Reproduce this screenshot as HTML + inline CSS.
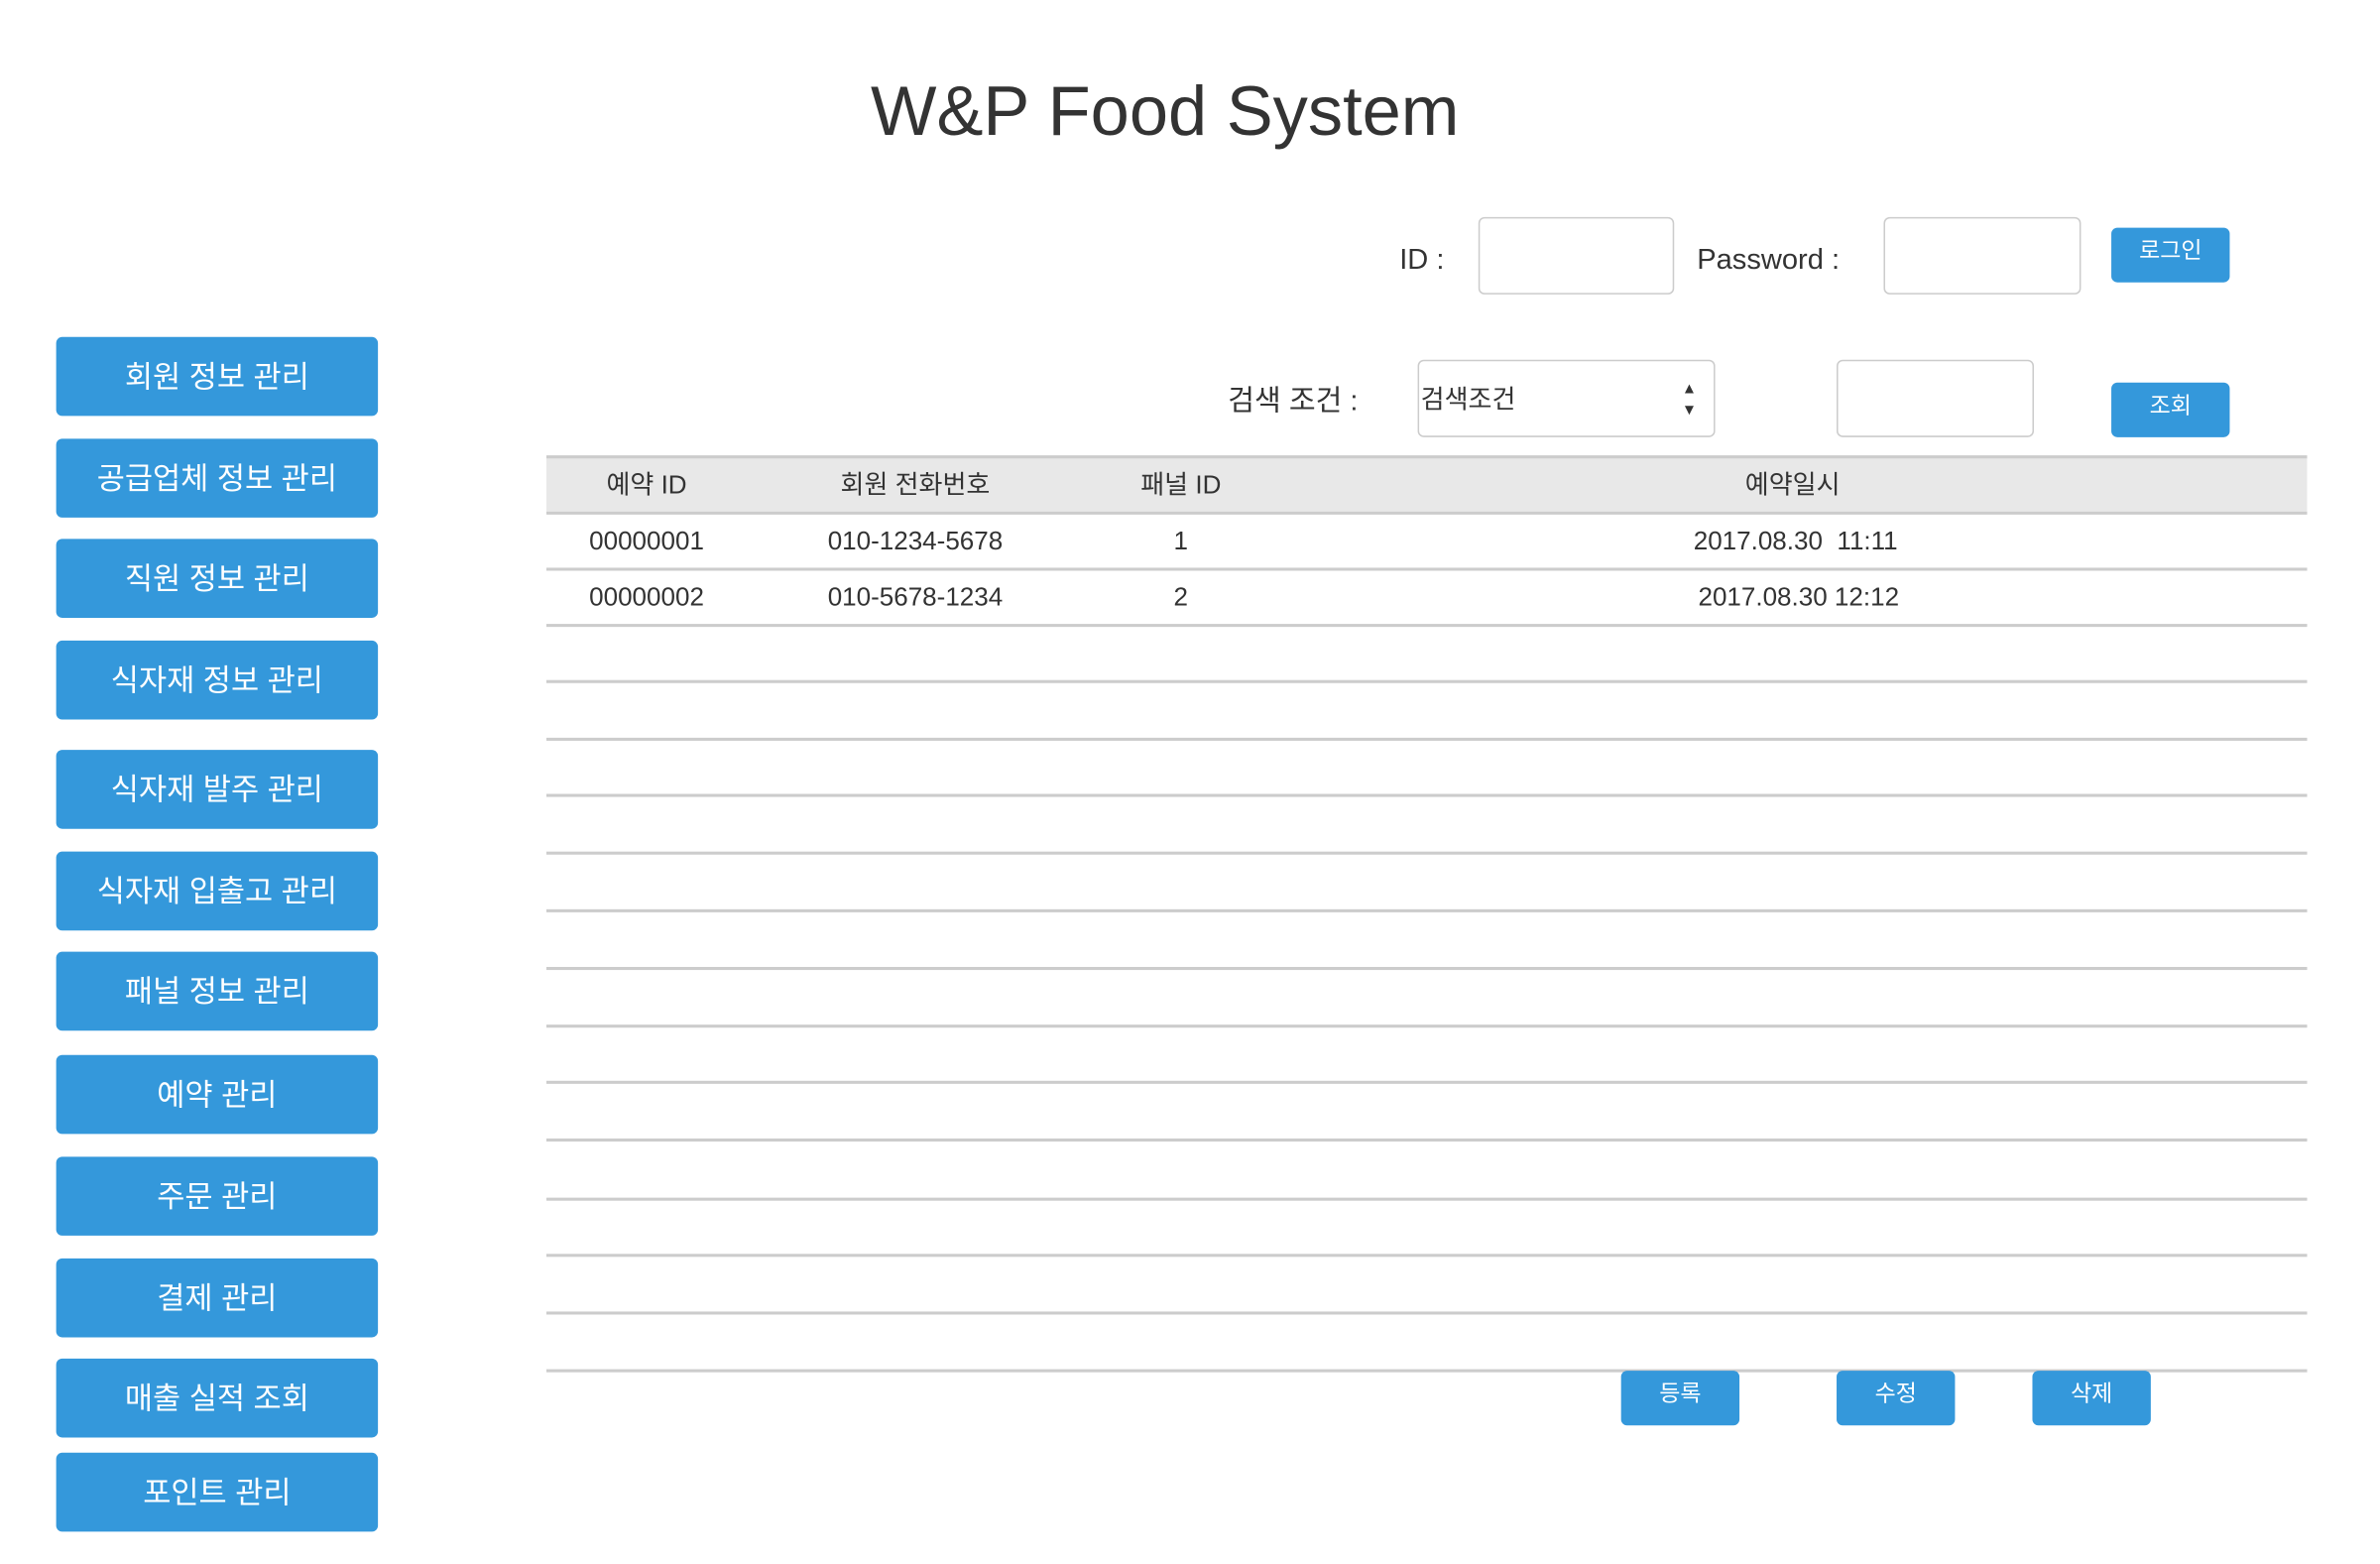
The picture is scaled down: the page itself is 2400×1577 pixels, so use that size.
<!DOCTYPE html>
<html><head><meta charset="utf-8">
<style>
html,body{margin:0;padding:0;background:#fff;}
body{width:2400px;height:1576px;overflow:hidden;}
#w{position:absolute;left:0;top:0;width:1568px;height:1030px;transform:scale(1.5306);transform-origin:0 0;font-family:"Liberation Sans","Noto Sans CJK KR",sans-serif;color:#333;}
.a{position:absolute;}
.b{position:absolute;background:#3498db;border-radius:4px;color:#fff;text-align:center;}
.side{left:37px;width:212px;height:52px;line-height:54px;font-size:20px;}
.in{position:absolute;border:1.5px solid #ccc;border-radius:4px;background:#fff;box-sizing:border-box;}
.lab{position:absolute;font-size:19px;line-height:24px;}
.line{position:absolute;left:360px;width:1160px;height:1.5px;background:#ccc;}
.c{position:absolute;font-size:17px;line-height:20px;transform:translateX(-50%);white-space:nowrap;}
.sb{width:78px;height:36px;font-size:15px;line-height:31px;}
</style></head><body><div id="w">
<div class="a" style="left:0;width:1535px;top:42px;text-align:center;font-size:46px;line-height:62px;color:#333;">W&amp;P Food System</div>

<div class="b side" style="top:222px">회원 정보 관리</div>
<div class="b side" style="top:289px">공급업체 정보 관리</div>
<div class="b side" style="top:355px">직원 정보 관리</div>
<div class="b side" style="top:422px">식자재 정보 관리</div>
<div class="b side" style="top:494px">식자재 발주 관리</div>
<div class="b side" style="top:561px">식자재 입출고 관리</div>
<div class="b side" style="top:627px">패널 정보 관리</div>
<div class="b side" style="top:695px">예약 관리</div>
<div class="b side" style="top:762px">주문 관리</div>
<div class="b side" style="top:829px">결제 관리</div>
<div class="b side" style="top:895px">매출 실적 조회</div>
<div class="b side" style="top:957px">포인트 관리</div>

<div class="lab" style="left:922px;top:160px">ID :</div>
<div class="in" style="left:974px;top:143px;width:129px;height:51px"></div>
<div class="lab" style="left:1118px;top:160px">Password :</div>
<div class="in" style="left:1241px;top:143px;width:130px;height:51px"></div>
<div class="b sb" style="left:1391px;top:150px">로그인</div>

<div class="lab" style="left:809px;top:253px">검색 조건 :</div>
<div class="in" style="left:934px;top:237px;width:196px;height:51px"><span style="position:absolute;left:1px;top:15px;font-size:17px;line-height:22px">검색조건</span>
<span style="position:absolute;left:173px;top:12px;font-size:10px;line-height:14px">▲<br>▼</span></div>
<div class="in" style="left:1210px;top:237px;width:130px;height:51px"></div>
<div class="b sb" style="left:1391px;top:252px">조회</div>

<div class="a" style="left:360px;top:300px;width:1160px;height:37px;background:#e8e8e8"></div>
<div class="line" style="top:300px"></div>
<div class="line" style="top:337px"></div>
<div class="line" style="top:374px"></div>
<div class="line" style="top:411px"></div>
<div class="line" style="top:448px"></div>
<div class="line" style="top:486px"></div>
<div class="line" style="top:523px"></div>
<div class="line" style="top:561px"></div>
<div class="line" style="top:599px"></div>
<div class="line" style="top:637px"></div>
<div class="line" style="top:675px"></div>
<div class="line" style="top:712px"></div>
<div class="line" style="top:750px"></div>
<div class="line" style="top:789px"></div>
<div class="line" style="top:826px"></div>
<div class="line" style="top:864px"></div>
<div class="line" style="top:902px"></div>

<div class="c" style="left:426px;top:310px">예약 ID</div>
<div class="c" style="left:603px;top:310px">회원 전화번호</div>
<div class="c" style="left:778px;top:310px">패널 ID</div>
<div class="c" style="left:1181px;top:310px">예약일시</div>

<div class="c" style="left:426px;top:347px">00000001</div>
<div class="c" style="left:603px;top:347px">010-1234-5678</div>
<div class="c" style="left:778px;top:347px">1</div>
<div class="c" style="left:1183px;top:347px">2017.08.30&nbsp; 11:11</div>

<div class="c" style="left:426px;top:384px">00000002</div>
<div class="c" style="left:603px;top:384px">010-5678-1234</div>
<div class="c" style="left:778px;top:384px">2</div>
<div class="c" style="left:1185px;top:384px">2017.08.30 12:12</div>

<div class="b sb" style="left:1068px;top:903px">등록</div>
<div class="b sb" style="left:1210px;top:903px">수정</div>
<div class="b sb" style="left:1339px;top:903px">삭제</div>
</div></body></html>
